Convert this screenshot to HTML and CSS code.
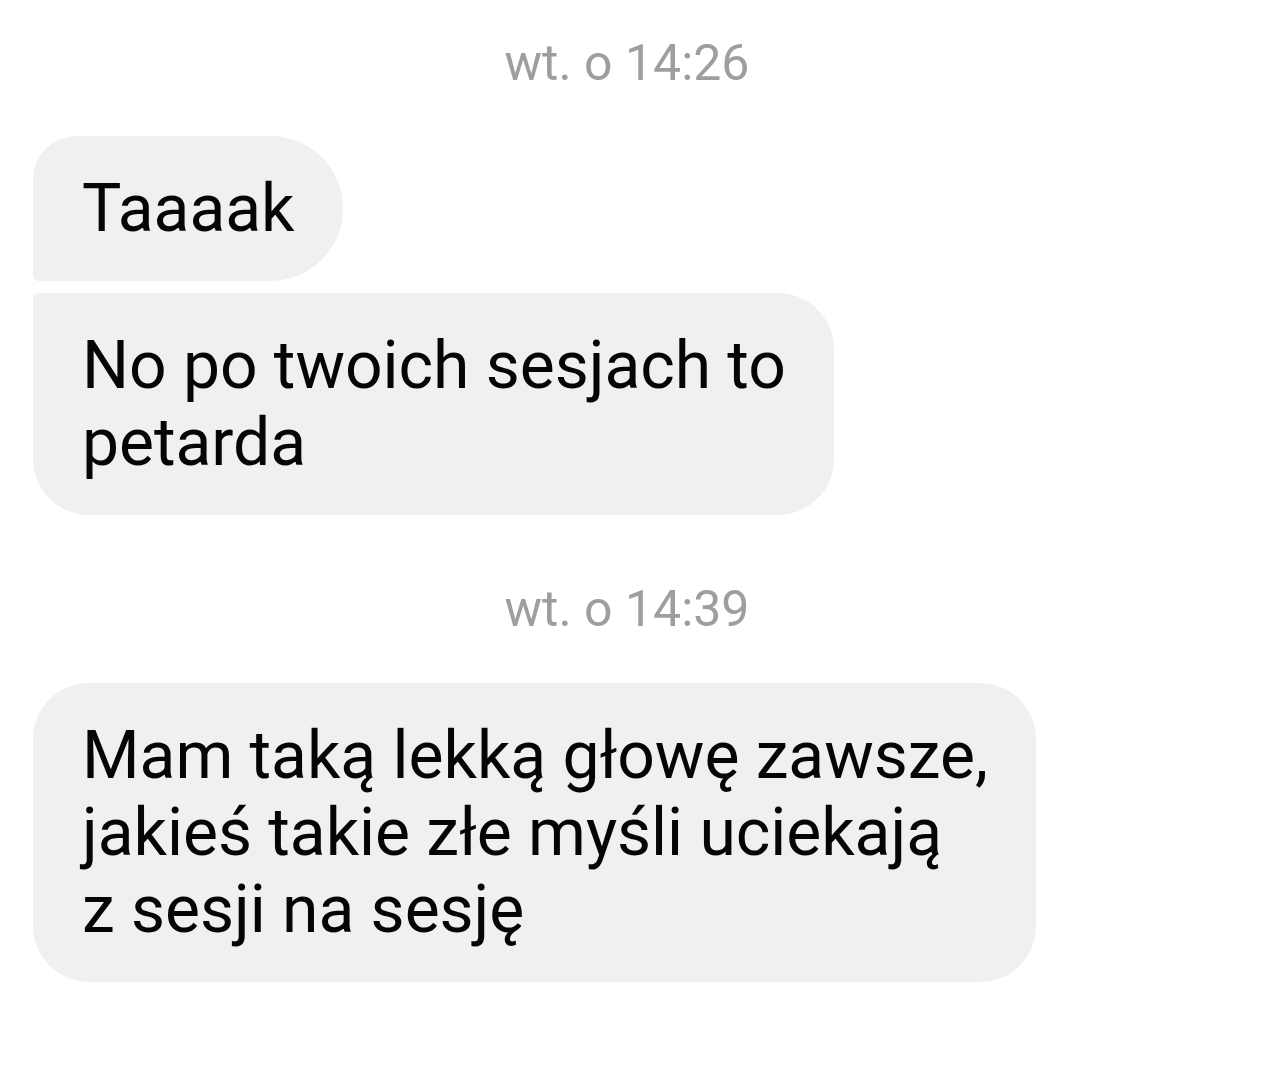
FILE: index.html
```html
<!DOCTYPE html>
<html lang="pl">
<head>
<meta charset="utf-8">
<title>Czat</title>
<link rel="stylesheet" href="styles.css">
</head>
<body>
<main class="chat">
  <div class="stamp stamp-first">wt. o 14:26</div>
  <div class="group">
    <div class="bubble bubble-top">Taaaak</div>
    <div class="bubble bubble-bottom">No po twoich sesjach to<br>petarda</div>
  </div>
  <div class="stamp stamp-second">wt. o 14:39</div>
  <div class="group">
    <div class="bubble bubble-single">Mam taką lekką głowę zawsze,<br>jakieś takie złe myśli uciekają<br>z sesji na sesję</div>
  </div>
</main>
</body>
</html>
```

FILE: styles.css
```css
html, body {
  margin: 0;
  padding: 0;
  background: #ffffff;
}

.chat {
  width: 1254px;
  font-family: Roboto, "Noto Sans", sans-serif;
  padding-left: 33px;
  box-sizing: border-box;
}

.stamp {
  text-align: center;
  color: #9e9e9e;
  font-size: 50px;
  line-height: 54px;
  margin-left: -33px;
}

.stamp-first {
  margin-top: 36px;
  margin-bottom: 46px;
}

.stamp-second {
  margin-top: 67px;
  margin-bottom: 47px;
}

.group {
  display: flex;
  flex-direction: column;
  align-items: flex-start;
  gap: 12px;
}

.bubble {
  background: #f0f0f0;
  color: #050505;
  font-size: 66px;
  line-height: 77px;
  padding: 34px 48px 34px 49px;
  border-radius: 56px;
  white-space: nowrap;
  letter-spacing: -0.05px;
}

.bubble-top {
  border-radius: 44px 73px 73px 6px;
}

.bubble-bottom {
  border-radius: 6px 56px 56px 56px;
}
```
